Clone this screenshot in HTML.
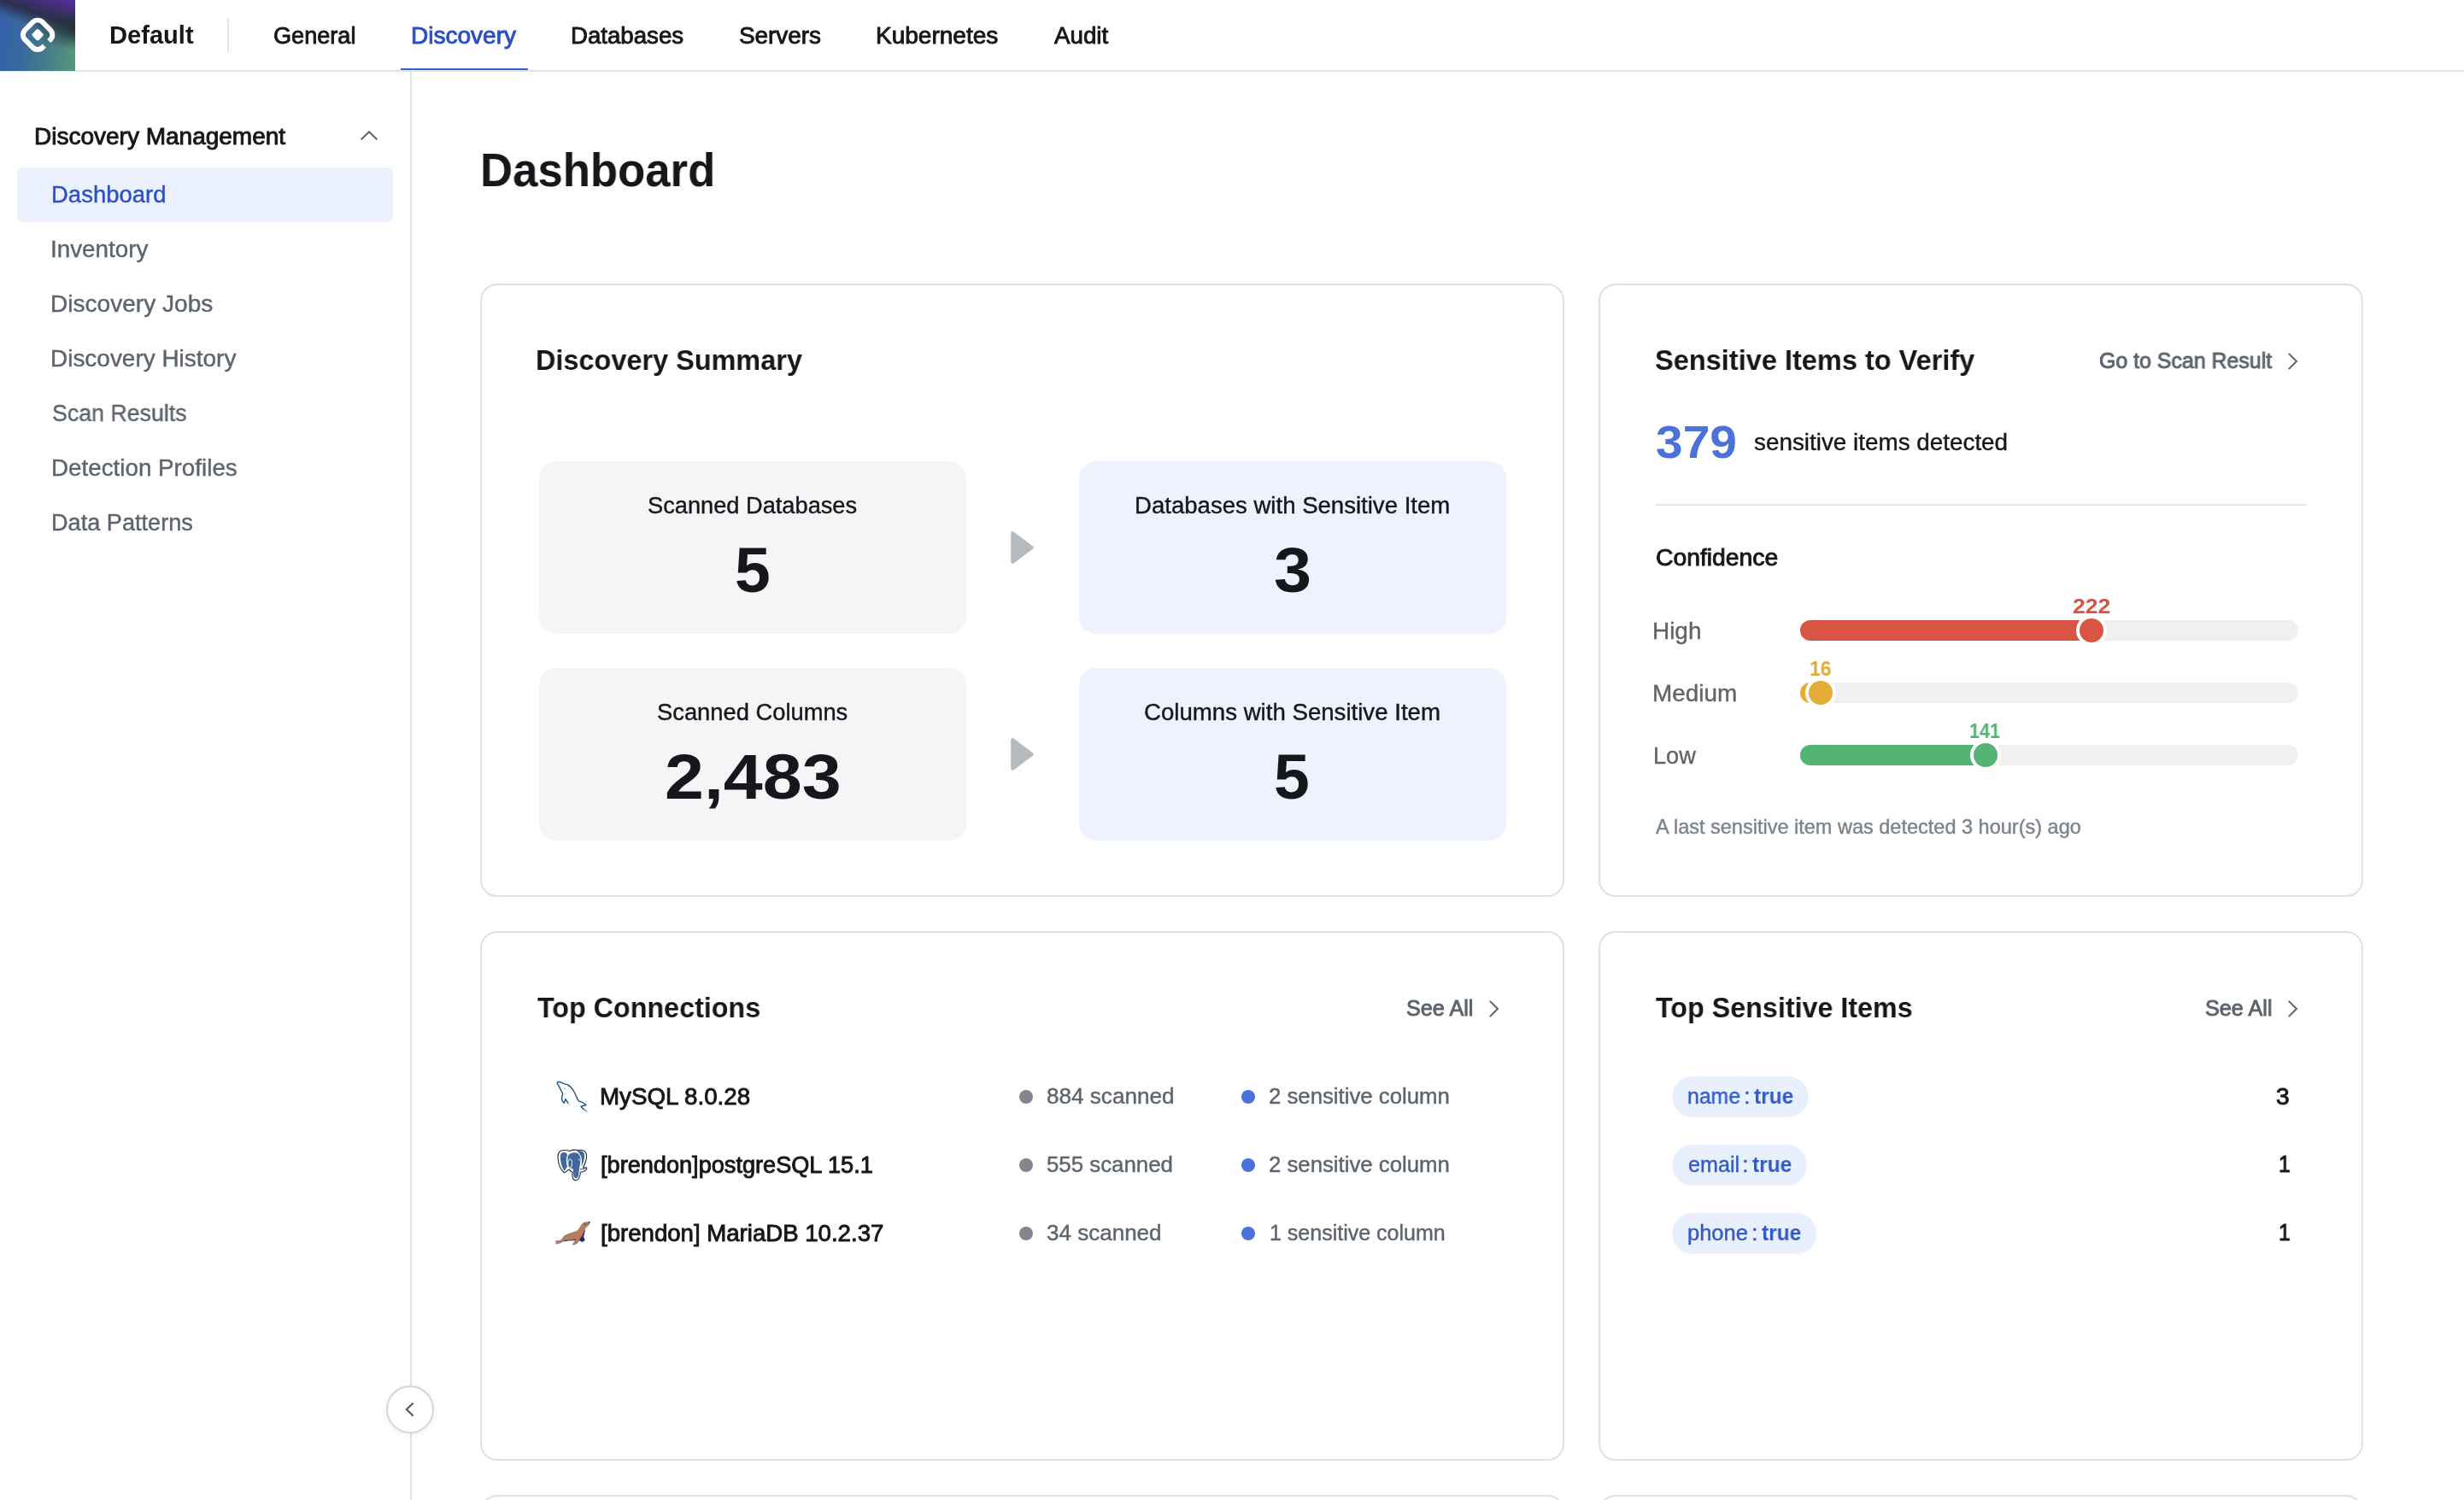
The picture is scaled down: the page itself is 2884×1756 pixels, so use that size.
<!DOCTYPE html>
<html lang="en">
<head>
<meta charset="utf-8">
<title>Discovery Dashboard</title>
<style>
*{box-sizing:border-box;margin:0;padding:0}
html,body{width:2884px;height:1756px;overflow:hidden;background:#fff}
#app{position:absolute;left:0;top:0;width:2884px;height:1756px;overflow:hidden;transform-origin:0 0}
body{position:relative;font-family:"Liberation Sans",sans-serif;color:#16171b;-webkit-font-smoothing:antialiased}
ul,li{list-style:none}
h1,h2,h3{font-weight:normal;font-size:inherit}
.abs,.t,svg.i{position:absolute}
.t{white-space:nowrap;line-height:1;display:block;transform-origin:0 0;will-change:transform}
.t.b{font-weight:bold}
.t.m{-webkit-text-stroke:.9px currentColor}
.t.r{-webkit-text-stroke:.4px currentColor}
/* top bar */
.topbar{left:0;top:0;width:2884px;height:84px;border-bottom:2px solid #e0e3e8;background:#fff}
.logo{left:0;top:0;width:88px;height:83px;overflow:hidden;
 background:
  linear-gradient(20deg,rgba(44,52,72,0) 57%,rgba(44,50,74,.5) 64%,rgba(43,46,74,.96) 72%,#3b2f6a 82%,#4f2f92 95%,#5530a0 100%),
  linear-gradient(97deg,#3460aa 0%,#38689f 30%,#437a8b 60%,#56997a 100%)}
.logo i{position:absolute;right:0;top:14px;width:50px;height:44px;background:radial-gradient(ellipse at 100% 45%,rgba(36,50,56,.8) 0%,rgba(36,50,56,.45) 40%,rgba(38,52,56,0) 72%)}
.vdiv{left:266px;top:21px;width:2px;height:40px;background:#e0e3e8}
.tab-ul{left:469px;top:80px;width:149px;height:2px;background:#3a5fd4}
/* sidebar */
.side-border{left:480px;top:84px;width:2px;height:1672px;background:#dfe2e8}
.side-active{left:20px;top:196px;width:440px;height:64px;border-radius:8px;background:#ecf1fe}
.collapse{left:452px;top:1622px;width:56px;height:56px;border-radius:50%;background:#fff;border:2px solid #d2d5db;box-shadow:0 2px 7px rgba(20,25,40,.07)}
/* cards */
.card{border:2px solid #dde0e6;border-radius:20px;background:#fff}
.tile{width:500px;height:202px;border-radius:20px}
.tile.g{background:#f4f5f7}
.tile.bl{background:#edf2fe}
.hr{left:1937px;top:590px;width:763px;height:2px;background:#e4e6eb}
.track{left:2107px;width:583px;height:24px;border-radius:12px;background:#f0f0f0}
.fill{left:2107px;height:24px;border-radius:12px 0 0 12px}
.knob{width:36px;height:36px;border-radius:50%;border:4px solid #fff}
.dot{width:16px;height:16px;border-radius:50%}
.dot.gy{background:#81868e}
.dot.bu{background:#4a72db}
.pill{height:48px;border-radius:24px;background:#e9f0fd}
</style>
</head>
<body>
<div id="app">

<header>
  <div class="abs topbar"></div>
  <div class="abs logo"><i></i>
    <svg class="i" style="left:0;top:0" width="88" height="83" viewBox="0 0 88 83">
      <g transform="translate(44.1 40.8) rotate(45)">
        <path d="M14.5 3.7V6.5A8 8 0 0 1 6.5 14.5H-6.5A8 8 0 0 1 -14.5 6.5V-6.5A8 8 0 0 1 -6.5 -14.5H6.5A8 8 0 0 1 14.5 -6.5V-4.2" fill="none" stroke="#fff" stroke-width="5.9"/>
        <rect x="-5.3" y="-5.3" width="10.6" height="10.6" rx="2.2" fill="#fff"/>
      </g>
    </svg>
  </div>
  <span class="t b brand" style="left:127.5px;top:27px;font-size:29.1px;transform:scaleX(0.996);color:#16171b">Default</span>
  <div class="abs vdiv"></div>
  <nav>
    <a class="t m" style="left:320.2px;top:29px;font-size:27.0px;transform:scaleX(1.004);color:#16171b">General</a>
    <a class="t m on" style="left:480.8px;top:29px;font-size:27.0px;transform:scaleX(1.038);color:#2c50c2">Discovery</a>
    <a class="t m" style="left:668.4px;top:29px;font-size:27.0px;transform:scaleX(1.023);color:#16171b">Databases</a>
    <a class="t m" style="left:865.3px;top:29px;font-size:27.0px;transform:scaleX(1.032);color:#16171b">Servers</a>
    <a class="t m" style="left:1024.7px;top:29px;font-size:27.0px;transform:scaleX(1.038);color:#16171b">Kubernetes</a>
    <a class="t m" style="left:1233.9px;top:29px;font-size:27.0px;transform:scaleX(1.026);color:#16171b">Audit</a>
  </nav>
  <div class="abs tab-ul"></div>
</header>

<aside>
  <div class="abs side-border"></div>
  <div class="abs side-active"></div>
  <h3 class="t m grp" style="left:40.0px;top:147px;font-size:27.0px;transform:scaleX(1.037);color:#16171b">Discovery Management</h3>
  <svg class="i" style="left:420px;top:151px" width="24" height="16" viewBox="0 0 24 16"><path d="M2.6 12.4L12 3.4L21.4 12.4" fill="none" stroke="#565b63" stroke-width="2"/></svg>
  <ul>
    <li class="t r on" style="left:59.5px;top:215px;font-size:27.0px;transform:scaleX(1.018);color:#2c50c2">Dashboard</li>
    <li class="t r" style="left:59.3px;top:279px;font-size:27.0px;transform:scaleX(1.030);color:#5d646e">Inventory</li>
    <li class="t r" style="left:59.4px;top:343px;font-size:27.0px;transform:scaleX(1.040);color:#5d646e">Discovery Jobs</li>
    <li class="t r" style="left:59.3px;top:407px;font-size:27.0px;transform:scaleX(1.035);color:#5d646e">Discovery History</li>
    <li class="t r" style="left:60.5px;top:471px;font-size:27.0px;transform:scaleX(0.991);color:#5d646e">Scan Results</li>
    <li class="t r" style="left:59.6px;top:535px;font-size:27.0px;transform:scaleX(1.029);color:#5d646e">Detection Profiles</li>
    <li class="t r" style="left:59.6px;top:599px;font-size:27.0px;transform:scaleX(1.005);color:#5d646e">Data Patterns</li>
  </ul>
  <div class="abs collapse"></div>
  <svg class="i" style="left:470px;top:1638px" width="20" height="24" viewBox="0 0 20 24"><path d="M13.6 4.6L5.8 12L13.6 19.4" fill="none" stroke="#4d545e" stroke-width="2"/></svg>
</aside>

<main>
  <h1 class="t b" style="left:561.8px;top:172px;font-size:54.9px;transform:scaleX(0.960);color:#16171b">Dashboard</h1>

  <!-- CARD 1 -->
  <section>
    <div class="abs card" style="left:562px;top:332px;width:1269px;height:718px"></div>
    <h2 class="t b h2" style="left:627.4px;top:405px;font-size:33.3px;transform:scaleX(0.974);color:#16171b">Discovery Summary</h2>
    <div class="abs tile g" style="left:631px;top:540px"></div>
    <div class="abs tile bl" style="left:1263px;top:540px"></div>
    <div class="abs tile g" style="left:631px;top:782px"></div>
    <div class="abs tile bl" style="left:1263px;top:782px"></div>
    <svg class="i" style="left:1180px;top:618px" width="34" height="46" viewBox="0 0 34 46"><path d="M5.2 6.2V39.8L27.8 23Z" fill="#b4babf" stroke="#b4babf" stroke-width="4" stroke-linejoin="round"/></svg>
    <svg class="i" style="left:1180px;top:860px" width="34" height="46" viewBox="0 0 34 46"><path d="M5.2 6.2V39.8L27.8 23Z" fill="#b4babf" stroke="#b4babf" stroke-width="4" stroke-linejoin="round"/></svg>
    <span class="t r" style="left:757.7px;top:579px;font-size:27.0px;transform:scaleX(1.008);color:#16171b">Scanned Databases</span>
    <strong class="t b" style="left:860.0px;top:630px;font-size:74.9px;transform:scaleX(1.003);color:#16171b">5</strong>
    <span class="t r" style="left:1328.0px;top:579px;font-size:27.0px;transform:scaleX(1.021);color:#16171b">Databases with Sensitive Item</span>
    <strong class="t b" style="left:1491.1px;top:630px;font-size:74.9px;transform:scaleX(1.056);color:#16171b">3</strong>
    <span class="t r" style="left:768.7px;top:821px;font-size:27.0px;transform:scaleX(1.012);color:#16171b">Scanned Columns</span>
    <strong class="t b" style="left:777.5px;top:872px;font-size:74.9px;transform:scaleX(1.102);color:#16171b">2,483</strong>
    <span class="t r" style="left:1339.2px;top:821px;font-size:27.0px;transform:scaleX(1.023);color:#16171b">Columns with Sensitive Item</span>
    <strong class="t b" style="left:1491.0px;top:872px;font-size:74.9px;transform:scaleX(1.003);color:#16171b">5</strong>
  </section>

  <!-- CARD 2 -->
  <section>
    <div class="abs card" style="left:1871px;top:332px;width:895px;height:718px"></div>
    <h2 class="t b h2" style="left:1937.2px;top:405px;font-size:33.3px;transform:scaleX(0.977);color:#16171b">Sensitive Items to Verify</h2>
    <a class="t m" style="left:2457.0px;top:410px;font-size:25.0px;transform:scaleX(0.996);color:#5d646e">Go to Scan Result</a>
    <svg class="i" style="left:2674px;top:411px" width="20" height="24" viewBox="0 0 20 24"><path d="M4.8 2.9L14 12L4.8 21.1" fill="none" stroke="#5d646e" stroke-width="2"/></svg>
    <strong class="t b" style="left:1937.8px;top:490px;font-size:54.1px;transform:scaleX(1.052);color:#4a72d8">379</strong>
    <span class="t r" style="left:2053.3px;top:505px;font-size:27.0px;transform:scaleX(1.031);color:#16171b">sensitive items detected</span>
    <div class="abs hr"></div>
    <h3 class="t m" style="left:1937.5px;top:640px;font-size:27.0px;transform:scaleX(1.049);color:#16171b">Confidence</h3>
    <span class="t r" style="left:1934.4px;top:726px;font-size:27.0px;transform:scaleX(1.034);color:#636466">High</span>
    <span class="t r" style="left:1934.4px;top:799px;font-size:27.0px;transform:scaleX(1.033);color:#636466">Medium</span>
    <span class="t r" style="left:1934.6px;top:872px;font-size:27.0px;transform:scaleX(1.006);color:#636466">Low</span>
    <div class="abs track" style="top:726px"></div>
    <div class="abs track" style="top:799px"></div>
    <div class="abs track" style="top:872px"></div>
    <div class="abs fill" style="top:726px;width:341px;background:#d95442"></div>
    <div class="abs fill" style="top:799px;width:24px;background:#e3ad38"></div>
    <div class="abs fill" style="top:872px;width:217px;background:#54b474"></div>
    <div class="abs knob" style="left:2430.3px;top:720px;background:#d95442"></div>
    <div class="abs knob" style="left:2113.3px;top:793px;background:#e3ad38"></div>
    <div class="abs knob" style="left:2305.6px;top:866px;background:#54b474"></div>
    <b class="t b" style="left:2426.2px;top:699px;font-size:23.4px;transform:scaleX(1.137);color:#d9533f">222</b>
    <b class="t b" style="left:2118.3px;top:772px;font-size:23.4px;transform:scaleX(0.977);color:#e2ab35">16</b>
    <b class="t b" style="left:2305.0px;top:845px;font-size:23.4px;transform:scaleX(0.924);color:#52b272">141</b>
    <p class="t r" style="left:1937.7px;top:957px;font-size:23.4px;transform:scaleX(1.005);color:#7c838d">A last sensitive item was detected 3 hour(s) ago</p>
  </section>

  <!-- CARD 3 -->
  <section>
    <div class="abs card" style="left:562px;top:1090px;width:1269px;height:620px"></div>
    <h2 class="t b h2" style="left:629.2px;top:1163px;font-size:33.3px;transform:scaleX(0.969);color:#16171b">Top Connections</h2>
    <a class="t m" style="left:1646.3px;top:1168px;font-size:25.0px;transform:scaleX(1.008);color:#5d646e">See All</a>
    <svg class="i" style="left:1739px;top:1169px" width="20" height="24" viewBox="0 0 20 24"><path d="M4.8 2.9L14 12L4.8 21.1" fill="none" stroke="#5d646e" stroke-width="2"/></svg>
    <svg class="i" style="left:640px;top:1255px" width="60" height="55" viewBox="0 0 60 55" fill="none" stroke="#1b5582" stroke-width="1.4" stroke-linecap="round" stroke-linejoin="round">
      <path d="M12.6 12.2C13 11.4 15.5 11.2 16.6 11.8C18 12.8 19.2 13.6 20.5 13.9C22 14.1 23.4 14.4 24.4 15C26.5 16 28.2 17.8 29.5 19.2C30.8 20.8 31.8 22.6 32.6 24.2C33.5 26 34.2 27.8 34.9 29.4C35.6 31 36.4 32.8 37.4 33.9C38.6 34.6 40.2 34.8 41.5 35.3C43 36 44.8 37.4 45.9 38.5C44.3 39.3 41.6 39.6 40 40.2C40.8 41.6 42 42.6 43 43.4"/>
      <path d="M43 43.4C44 44.2 45 44.9 45.8 45.4" stroke-width="1.1"/>
      <path d="M45.8 45.4L47.6 46.6" stroke-width=".7" opacity=".6"/>
      <path d="M12.6 12.2C12 12.8 12.2 13.4 12.6 14C13.5 15.6 14.6 17.4 15.5 19.2C16.5 21.2 17.6 23.2 18.6 25C19 26.2 18.2 27.4 17.8 28.6C17.4 30 17.4 31.6 17.9 33C18.4 34.4 19.2 35.6 20.3 36.3C21 35 21.2 33 22 31.6C22.8 33 23.8 34.8 24.8 36.2"/>
      <path d="M24.8 36.2L26.4 38.5" stroke-width=".7" opacity=".55"/>
      <path d="M20.3 18.8L21.5 20" stroke-width="1" opacity=".7"/>
    </svg>
    <svg class="i" style="left:640px;top:1335px" width="60" height="55" viewBox="0 0 60 55">
      <path d="M20 11.5C14 11.5 12.5 16 13 21C13.5 27 16 34 20 37.5C22 38.5 24 35 26 34C28 36 29.5 37 30 37L30 42C30 46 33 47 35 46.5C38 46 39 42 39.5 37C43 37 46.5 35 47 32.5C46 31 44 32.5 42.5 32C45 27 47 21 46.5 17C46 12 41 10.5 36 11.5C34 11 30 11 27 12.5C25 11.8 22 11.5 20 11.5Z" fill="#fff" stroke="#1c2b45" stroke-width="1.1" stroke-linejoin="round"/>
      <path d="M20 14C16.5 14 15.5 17 16 22C16.5 28 18.5 33 20.5 35.5C22 34 23.5 32 24 30C22.5 27 22.5 21 24 17.5C24 15 22 14 20 14Z" fill="#43679a"/>
      <path d="M25 18C27 14 33 13.5 36 15C39 17 40 21 39.5 24C39 28 38.5 31 38 33C37.5 37 37.5 41 36.5 43C35 45 32 44.5 31.5 42C31 39 31 35 30.5 33C29 33 27 33 25.5 31C24 28 24 22 25 18Z" fill="#43679a"/>
      <path d="M35 12.3C38 11.7 42.4 12 43.6 15.2C44.6 18 44 22 42.6 26C41.8 28 41 29.6 40.3 30.8C41 27.4 41.3 24.6 40.9 22C40.4 18.4 38.4 14.8 35 12.3Z" fill="#43679a"/>
      <path d="M25.4 23.2C26.6 21.6 28.6 21.8 29.2 23.4C29.8 26 29.6 29.6 28.4 31.8C27 32.6 25.4 31.4 25 29.6C24.6 27.6 24.7 25 25.4 23.2Z" fill="none" stroke="#fff" stroke-width="1"/>
      <path d="M36.6 22.6C38.2 21.4 39.6 22.4 39.4 24.4" fill="none" stroke="#fff" stroke-width=".8"/>
      <path d="M39 33.4C41 34 43.6 33.6 45.4 32.6" fill="none" stroke="#43679a" stroke-width="1.2"/>
    </svg>
    <svg class="i" style="left:640px;top:1415px" width="60" height="55" viewBox="0 0 60 55">
      <path d="M44.4 25.7L42.6 33L44.2 36.8L41.4 38.6L37.6 36.4L41.8 30.4Z" fill="#1f2a5c" stroke="#1f2a5c" stroke-width="1" stroke-linejoin="round"/>
      <path d="M20 37.8C25 36.6 30 36.7 34 36.6" fill="none" stroke="#1f2a5c" stroke-width="1.4"/>
      <path d="M50.2 15.9C48.4 15.7 45.8 15.8 44 16.2C42.4 16.8 41.2 18 40.3 19.4C39.2 21 38.4 22.8 37.4 24.2C36.2 25.6 34.6 26.5 33 27.1C31 27.9 28.6 28.6 26.4 29.3C24.4 30 22.2 30.8 20.5 31.9C19.2 33 18.6 34.8 17.6 35.9C16.8 36.8 15.8 37.2 14.7 37.4C13.2 37.7 11.4 37.8 9.9 38.1C10.6 38.5 11.2 38.9 11.7 39.4C11.2 39.9 10.7 40.4 10.3 40.9C11.8 40.8 13.4 40.7 14.7 40.3C16.8 39.6 18.6 38.2 20.5 37.4C22.2 36.7 24 36.5 25.7 36.3C28.2 36.1 30.8 36.2 33 36.3C33.5 36 33.9 35.6 34.1 35.2C33.4 37.4 31.8 39.8 30.4 41.8C30.8 42.1 31.2 42.3 31.5 42.2C33 41.6 34.6 40.8 35.9 40C37.1 38.6 38.1 36.8 38.9 35.2C40.1 33.6 41.3 31.9 42.2 30.1C43.3 28 44.1 25.7 44.7 23.5C45.1 22.7 45.6 22.1 46.2 21.6C47.4 20.6 48.6 19.5 49.5 18.3C50 17.5 50.2 16.7 50.2 15.9Z" fill="#b87d5c" stroke="#5a4560" stroke-width=".5" stroke-linejoin="round"/>
      <circle cx="44.6" cy="18.3" r=".8" fill="#1f2a5c"/>
      <circle cx="49.6" cy="15.7" r=".9" fill="#2b3568"/>
    </svg>
    <span class="t m" style="left:701.8px;top:1271px;font-size:27.0px;transform:scaleX(1.026);color:#16171b">MySQL 8.0.28</span>
    <span class="t m" style="left:702.7px;top:1351px;font-size:27.0px;transform:scaleX(1.005);color:#16171b">[brendon]postgreSQL 15.1</span>
    <span class="t m" style="left:702.7px;top:1431px;font-size:27.0px;transform:scaleX(1.022);color:#16171b">[brendon] MariaDB 10.2.37</span>
    <i class="abs dot gy" style="left:1193px;top:1276px"></i>
    <i class="abs dot gy" style="left:1193px;top:1356px"></i>
    <i class="abs dot gy" style="left:1193px;top:1436px"></i>
    <span class="t r" style="left:1225.0px;top:1271px;font-size:25.0px;transform:scaleX(1.044);color:#5d646e">884 scanned</span>
    <span class="t r" style="left:1224.9px;top:1351px;font-size:25.0px;transform:scaleX(1.033);color:#5d646e">555 scanned</span>
    <span class="t r" style="left:1225.1px;top:1431px;font-size:25.0px;transform:scaleX(1.041);color:#5d646e">34 scanned</span>
    <i class="abs dot bu" style="left:1453px;top:1276px"></i>
    <i class="abs dot bu" style="left:1453px;top:1356px"></i>
    <i class="abs dot bu" style="left:1453px;top:1436px"></i>
    <span class="t r" style="left:1485.0px;top:1271px;font-size:25.0px;transform:scaleX(1.030);color:#5d646e">2 sensitive column</span>
    <span class="t r" style="left:1485.0px;top:1351px;font-size:25.0px;transform:scaleX(1.030);color:#5d646e">2 sensitive column</span>
    <span class="t r" style="left:1485.7px;top:1431px;font-size:25.0px;color:#5d646e">1 sensitive column</span>
  </section>

  <!-- CARD 4 -->
  <section>
    <div class="abs card" style="left:1871px;top:1090px;width:895px;height:620px"></div>
    <h2 class="t b h2" style="left:1938.1px;top:1163px;font-size:33.3px;transform:scaleX(0.969);color:#16171b">Top Sensitive Items</h2>
    <a class="t m" style="left:2581.2px;top:1168px;font-size:25.0px;transform:scaleX(1.009);color:#5d646e">See All</a>
    <svg class="i" style="left:2674px;top:1169px" width="20" height="24" viewBox="0 0 20 24"><path d="M4.8 2.9L14 12L4.8 21.1" fill="none" stroke="#5d646e" stroke-width="2"/></svg>
    <div class="abs pill" style="left:1957px;top:1260px;width:160px"></div>
    <div class="abs pill" style="left:1957px;top:1340px;width:158px"></div>
    <div class="abs pill" style="left:1957px;top:1420px;width:169px"></div>
    <span class="t r" style="left:1975.2px;top:1271px;font-size:25.0px;transform:scaleX(0.991);color:#315ac9">name</span><span class="t r" style="left:2041.2px;top:1271px;font-size:25.0px;transform:scaleX(1.100);color:#315ac9">:</span><b class="t b" style="left:2053.1px;top:1271px;font-size:25.0px;transform:scaleX(0.981);color:#315ac9">true</b>
    <span class="t r" style="left:1975.5px;top:1351px;font-size:25.0px;transform:scaleX(1.005);color:#315ac9">email</span><span class="t r" style="left:2038.9px;top:1351px;font-size:25.0px;transform:scaleX(1.100);color:#315ac9">:</span><b class="t b" style="left:2050.8px;top:1351px;font-size:25.0px;transform:scaleX(0.981);color:#315ac9">true</b>
    <span class="t r" style="left:1975.2px;top:1431px;font-size:25.0px;transform:scaleX(1.020);color:#315ac9">phone</span><span class="t r" style="left:2049.9px;top:1431px;font-size:25.0px;transform:scaleX(1.100);color:#315ac9">:</span><b class="t b" style="left:2061.8px;top:1431px;font-size:25.0px;transform:scaleX(0.981);color:#315ac9">true</b>
    <span class="t m" style="left:2664.1px;top:1271px;font-size:27.0px;transform:scaleX(1.046);color:#16171b">3</span>
    <span class="t m" style="left:2667.3px;top:1350px;font-size:27.0px;transform:scaleX(0.920);color:#16171b">1</span>
    <span class="t m" style="left:2667.3px;top:1430px;font-size:27.0px;transform:scaleX(0.920);color:#16171b">1</span>
  </section>

  <!-- next row (cut off by viewport) -->
  <div class="abs" style="left:562px;top:1750px;width:2204px;height:6px;overflow:hidden">
    <section class="abs card" style="left:0;top:0;width:1269px;height:120px"></section>
    <section class="abs card" style="left:1309px;top:0;width:895px;height:120px"></section>
  </div>
</main>

</div>
<script>
/* Layout is authored at 2884x1756 CSS px. If the viewport has another width (e.g. 1442 CSS px at 2x DPR), scale the page to fit. */
(function(){
  function fit(){
    var d=document.documentElement,b=document.body,a=document.getElementById('app'),w=window.innerWidth||d.clientWidth||0;
    if(w>=320&&Math.abs(w-2884)>2){var z=w/2884,h=Math.round(1756*z)+'px';a.style.transform='scale('+z+')';b.style.width=d.style.width=w+'px';b.style.height=d.style.height=h;}
    else{a.style.transform='';b.style.width=d.style.width=b.style.height=d.style.height='';}
  }
  fit();window.addEventListener('resize',fit);
})();
</script>
</body>
</html>
